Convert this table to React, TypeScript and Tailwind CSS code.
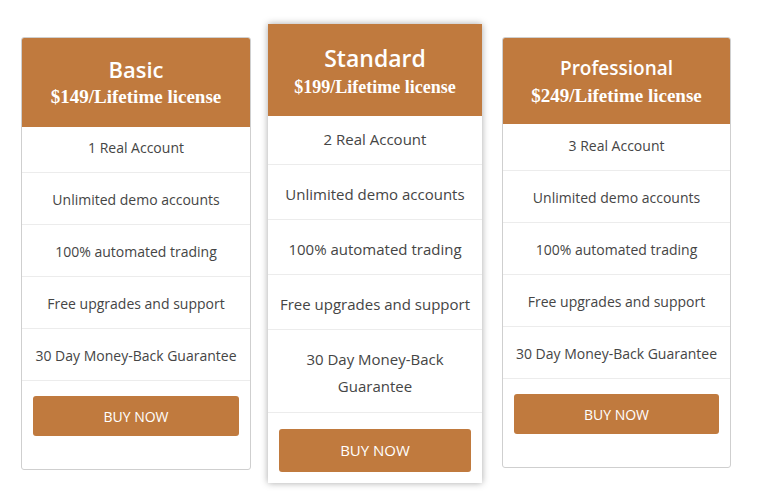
const features = [
  'Unlimited demo accounts',
  '100% automated trading',
  'Free upgrades and support',
  '30 Day Money-Back Guarantee',
];

const plans = [
  {
    name: 'Basic',
    price: '$149/Lifetime license',
    first: '1 Real Account',
    card: 'mt-[37px] w-[230px] border border-[#cfcfcf] rounded-[3px]',
    head: 'pt-[16px] pb-[18px]',
    title: 'text-[22px] leading-[30px]',
    priceCls: 'text-[19px] leading-[25px]',
    firstRow: 'pt-[8px] pb-[12px] text-[14px] leading-[25px]',
    row: 'pt-[14px] pb-[12px] text-[14px] leading-[25px]',
    btnWrap: 'px-[11px] pt-[15px] pb-[33px]',
    btn: 'h-[40px] text-[14px]',
  },
  {
    name: 'Standard',
    price: '$199/Lifetime license',
    first: '2 Real Account',
    card: 'mt-[24px] ml-[17px] w-[214px] shadow-[0_0_7px_rgba(0,0,0,0.35)]',
    head: 'pt-[18px] pb-[16px]',
    title: 'text-[23px] leading-[32px]',
    priceCls: 'text-[18px] leading-[26px]',
    firstRow: 'pt-[10px] pb-[11px] text-[15px] leading-[27px]',
    row: 'pt-[16px] pb-[11px] px-[8px] text-[15px] leading-[27px] last:pb-[12px]',
    btnWrap: 'px-[11px] pt-[16px] pb-[11px]',
    btn: 'h-[43px] text-[15px]',
  },
  {
    name: 'Professional',
    price: '$249/Lifetime license',
    first: '3 Real Account',
    card: 'mt-[37px] ml-[20px] w-[229px] border border-[#cfcfcf] rounded-[3px]',
    head: 'pt-[15px] pb-[16px]',
    title: 'text-[19px] leading-[30px]',
    priceCls: 'text-[19px] leading-[25px]',
    firstRow: 'pt-[9px] pb-[12px] text-[14px] leading-[25px]',
    row: 'pt-[14px] pb-[12px] text-[14px] leading-[25px]',
    btnWrap: 'px-[11px] pt-[15px] pb-[33px]',
    btn: 'h-[40px] text-[14px]',
  },
];

export default function App() {
  return (
    <div className="w-[770px] h-[498px] bg-white flex items-start pl-[21px]" style={{ fontFamily: '"Open Sans", sans-serif' }}>
      {plans.map(plan => (
        <div key={plan.name} className={`bg-white overflow-hidden ${plan.card}`}>
          <div className={`bg-[#c07a3e] text-white text-center ${plan.head}`}>
            <h2 className={`font-semibold ${plan.title}`}>{plan.name}</h2>
            <p className={`font-bold ${plan.priceCls}`} style={{ fontFamily: '"Liberation Serif", serif' }}>
              {plan.price}
            </p>
          </div>
          <div className="text-[#454545] text-center">
            <div className={`border-b border-[#ececec] ${plan.firstRow}`}>{plan.first}</div>
            {features.map(f => (
              <div key={f} className={`border-b border-[#ececec] ${plan.row}`}>
                {f}
              </div>
            ))}
          </div>
          <div className={plan.btnWrap}>
            <button className={`w-full bg-[#c07a3e] text-white rounded-[3px] uppercase ${plan.btn}`}>Buy Now</button>
          </div>
        </div>
      ))}
    </div>
  );
}
